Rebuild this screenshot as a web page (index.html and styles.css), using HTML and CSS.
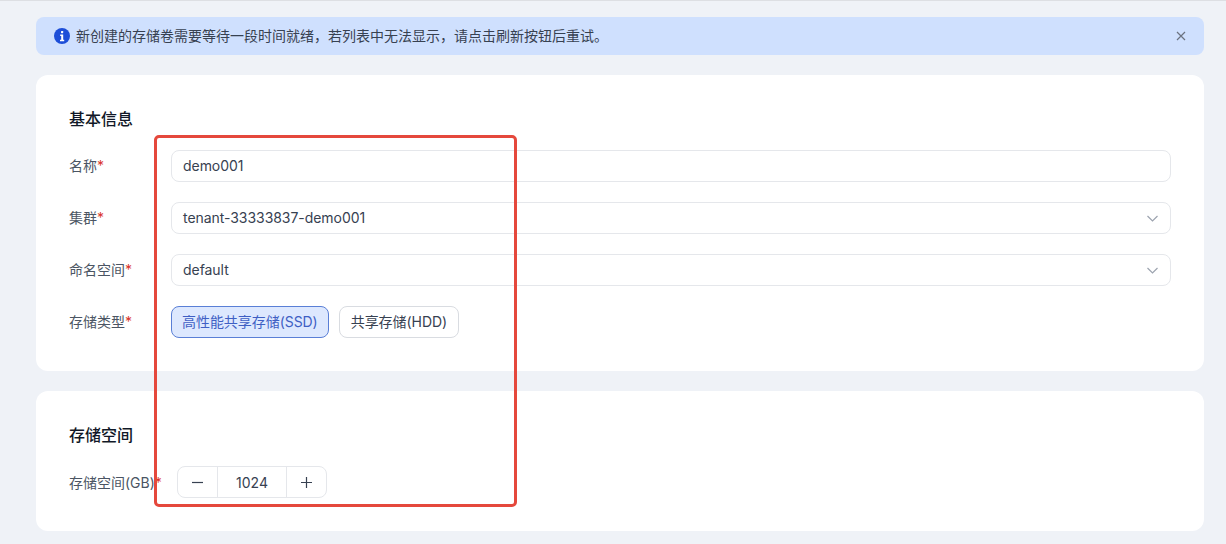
FILE: index.html
```html
<!DOCTYPE html>
<html lang="zh-CN">
<head>
<meta charset="utf-8">
<title>存储卷</title>
<link rel="stylesheet" href="styles.css">
</head>
<body>
<main class="page">
  <div class="alert">
    <svg class="alert-icon" viewBox="0 0 16 16" width="16" height="16"><circle cx="8" cy="8" r="8" fill="#1d4ed8"/><rect x="7" y="3" width="2.2" height="2.2" rx=".6" fill="#fff"/><path d="M6.2 6.6H9.2v5.2h1v1.4H6v-1.4h1.2V8H6.2z" fill="#fff"/></svg>
    <span class="alert-text">新创建的存储卷需要等待一段时间就绪，若列表中无法显示，请点击刷新按钮后重试。</span>
    <svg class="alert-close" viewBox="0 0 10 10" width="10" height="10"><path d="M1 1l8 8M9 1L1 9" stroke="#6b7280" stroke-width="1.2" fill="none"/></svg>
  </div>

  <section class="card">
    <h2 class="card-title">基本信息</h2>
    <div class="rows">
      <div class="row">
        <label class="label">名称<span class="req">*</span></label>
        <div class="field"><span>demo001</span></div>
      </div>
      <div class="row">
        <label class="label">集群<span class="req">*</span></label>
        <div class="field"><span>tenant-33333837-demo001</span><svg class="chev" viewBox="0 0 11 7" width="11" height="7"><path d="M.5 1l5 5 5-5" stroke="#9ca3af" stroke-width="1.2" fill="none"/></svg></div>
      </div>
      <div class="row">
        <label class="label">命名空间<span class="req">*</span></label>
        <div class="field"><span>default</span><svg class="chev" viewBox="0 0 11 7" width="11" height="7"><path d="M.5 1l5 5 5-5" stroke="#9ca3af" stroke-width="1.2" fill="none"/></svg></div>
      </div>
      <div class="row">
        <label class="label">存储类型<span class="req">*</span></label>
        <div class="options">
          <button class="option option-on">高性能共享存储(SSD)</button>
          <button class="option">共享存储(HDD)</button>
        </div>
      </div>
    </div>
  </section>

  <section class="card">
    <h2 class="card-title">存储空间</h2>
    <div class="rows">
      <div class="row">
        <label class="label label-wide">存储空间(GB)<span class="req">*</span></label>
        <div class="stepper">
          <span class="step"><svg viewBox="0 0 11 11" width="11" height="11"><path d="M0 5.5h11" stroke="#374151" stroke-width="1.2"/></svg></span>
          <span class="step-value">1024</span>
          <span class="step"><svg viewBox="0 0 11 11" width="11" height="11"><path d="M0 5.5h11M5.5 0v11" stroke="#374151" stroke-width="1.2"/></svg></span>
        </div>
      </div>
    </div>
  </section>
</main>
<div class="mark"></div>
</body>
</html>
```

FILE: styles.css
```css
* { box-sizing: border-box; }
html, body { margin: 0; height: 544px; overflow: hidden; }
body {
  background: #eff2f7;
  border-top: 1px solid #dddfe3;
  font-family: Inter, "Noto Sans CJK SC", sans-serif;
  font-size: 14px;
  color: #4b5563;
  position: relative;
}
.page {
  padding: 16px 22px 0 36px;
  display: flex;
  flex-direction: column;
  gap: 20px;
}
.alert {
  height: 38px;
  background: #cfe0fe;
  border-radius: 8px;
  display: flex;
  align-items: center;
  padding: 0 18px 0 18px;
  color: #374151;
}
.alert-icon { flex: none; margin-right: 6px; }
.alert-text { flex: 1; padding-bottom: 2px; }
.alert-close { flex: none; }
.card {
  background: #fff;
  border-radius: 12px;
  padding: 32px 33px 33px;
}
.card-title {
  margin: 0 0 19px;
  font-size: 16px;
  line-height: 24px;
  font-weight: 500;
  color: #111827;
}
.rows { display: flex; flex-direction: column; gap: 20px; }
.row { display: flex; align-items: center; height: 32px; }
.label { flex: none; width: 102px; padding-bottom: 2px; }
.label-wide { width: 108px; padding-bottom: 0; }
.req { color: #d9352b; }
.field {
  flex: 1;
  height: 32px;
  border: 1px solid #e5e7eb;
  border-radius: 8px;
  display: flex;
  align-items: center;
  justify-content: space-between;
  padding: 0 12.5px 2px 11px;
  color: #374151;
  letter-spacing: -0.05px;
}
.chev { margin-top: 3px; }
.options { display: flex; gap: 10px; }
.option {
  height: 32px;
  padding: 0 10px 2px;
  background: #fff;
  border: 1px solid #d9dce1;
  border-radius: 8px;
  font: inherit;
  letter-spacing: -0.05px;
  color: #374151;
}
.option + .option { padding-left: 11px; padding-right: 11px; }
.option-on {
  background: #dde8fe;
  border-color: #5a7fd6;
  color: #3f5fc4;
}
.stepper {
  width: 150px;
  height: 32px;
  border: 1px solid #e5e7eb;
  border-radius: 8px;
  display: flex;
  align-items: center;
  color: #374151;
}
.step {
  flex: none;
  width: 39px;
  height: 30px;
  display: flex;
  align-items: center;
  justify-content: center;
}
.step-value {
  flex: 1;
  height: 30px;
  line-height: 31px;
  text-align: center;
  border-left: 1px solid #e5e7eb;
  border-right: 1px solid #e5e7eb;
}
.mark {
  position: absolute;
  left: 154px;
  top: 134px;
  width: 363px;
  height: 372px;
  border: 3px solid #e5483c;
  border-radius: 5px;
  pointer-events: none;
}
```
